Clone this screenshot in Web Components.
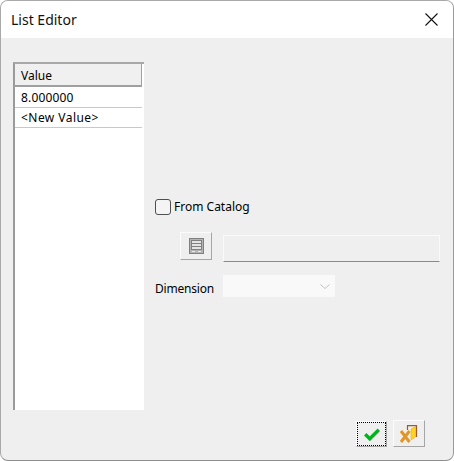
<!DOCTYPE html>
<html>
<head>
<meta charset="utf-8">
<title>List Editor</title>
<style>
  html, body { margin: 0; padding: 0; background: #fff; }
  body { font: 12px "Noto Sans", "Liberation Sans", sans-serif; color: #000; }
</style>
</head>
<body>
<list-editor></list-editor>

<script>
class ValueList extends HTMLElement {
  constructor() {
    super();
    this.attachShadow({ mode: "open" });
    this.shadowRoot.innerHTML = `
      <style>
        :host {
          display: block;
          box-sizing: border-box;
          width: 131px;
          height: 348px;
          background: #fff;
          border-left: 2px solid #9b9b9b;
          border-top: 2px solid #a8a8a8;
          font-size: 12px;
        }
        .head {
          box-sizing: border-box;
          height: 23px;
          width: 127px;
          padding-left: 6px;
          line-height: 23px;
          background: #f0f0f0;
          border-right: 1px solid #a0a0a0;
          border-bottom: 2px solid #a0a0a0;
        }
        .row {
          box-sizing: border-box;
          width: 127px;
          height: 20px;
          padding-left: 6px;
          line-height: 20px;
          letter-spacing: 0.15px;
          border-bottom: 1px solid #c8c8c8;
        }
        .row.first { height: 21px; line-height: 21px; }
        .row.new { letter-spacing: 0.45px; }
      </style>
      <div class="head">Value</div>
      <div class="row first">8.000000</div>
      <div class="row new">&lt;New Value&gt;</div>
    `;
  }
}

class IconButton extends HTMLElement {
  constructor() {
    super();
    this.attachShadow({ mode: "open" });
    this.shadowRoot.innerHTML = `
      <style>
        :host {
          display: flex;
          box-sizing: border-box;
          align-items: center;
          justify-content: center;
          position: relative;
          width: 32px;
          height: 27px;
          background: #efefef;
          border: 1px solid;
          border-color: #fbfbfb #a6a6a6 #a6a6a6 #fbfbfb;
        }
        :host([focused])::after {
          content: "";
          position: absolute;
          inset: 0;
          border: 1px dotted #000;
        }
      </style>
      <slot></slot>
    `;
  }
}

class ListEditor extends HTMLElement {
  constructor() {
    super();
    this.attachShadow({ mode: "open" });
    this.shadowRoot.innerHTML = `
      <style>
        :host {
          display: block;
          width: 454px;
          height: 461px;
          font: 12px "Noto Sans", "Liberation Sans", sans-serif;
        }
        .win {
          box-sizing: border-box;
          width: 454px;
          height: 461px;
          display: flex;
          flex-direction: column;
          overflow: hidden;
          background: #efefef;
          border: 1px solid #a9a9a9;
          border-bottom-color: #8e8e8e;
          border-right-color: #9a9a9a;
          border-radius: 8px;
        }
        .title {
          flex: none;
          height: 37px;
          display: flex;
          align-items: center;
          justify-content: space-between;
          padding: 0 15px 0 10px;
          background: #fff;
          font-size: 14px;
          color: #111;
        }
        .title svg { display: block; }
        .main {
          flex: none;
          display: flex;
          padding: 24px 0 0 12px;
        }
        .side {
          flex: none;
          width: 296px;
          padding: 136px 0 0 11px;
        }
        .check {
          display: flex;
          align-items: center;
          height: 18px;
          gap: 3px;
        }
        .check .label { padding-bottom: 2px; }
        .box {
          box-sizing: border-box;
          width: 16px;
          height: 16px;
          background: #f4f4f4;
          border: 1px solid #4f4f4f;
          border-radius: 3px;
        }
        .cat {
          display: flex;
          align-items: flex-start;
          gap: 11px;
          margin: 16px 0 0 25px;
        }
        .cat icon-button { height: 28px; }
        .path {
          box-sizing: border-box;
          width: 217px;
          height: 27px;
          margin-top: 3px;
          background: #efefef;
          border: 1px solid #fafafa;
          border-bottom: 1px solid #8a8a8a;
        }
        .dim {
          display: flex;
          align-items: center;
          margin-top: 13px;
          height: 22px;
        }
        .dim label { width: 68px; padding-top: 4px; letter-spacing: -0.2px; }
        .select {
          box-sizing: border-box;
          width: 112px;
          height: 22px;
          display: flex;
          align-items: center;
          justify-content: flex-end;
          padding-right: 5px;
          background: #f9f9f9;
        }
        .foot {
          flex: none;
          display: flex;
          align-items: flex-end;
          justify-content: flex-end;
          gap: 6px;
          padding: 10px 28px 0 0;
        }
        .foot icon-button[focused] { height: 26px; width: 31px; }
      </style>
      <div class="win">
        <div class="title">
          <span>List Editor</span>
          <svg width="13" height="13" viewBox="0 0 13 13" fill="none" stroke="#111" stroke-width="1.1">
            <path d="M0.5 0.5L12.5 12.5M12.5 0.5L0.5 12.5"/>
          </svg>
        </div>
        <div class="main">
          <value-list></value-list>
          <div class="side">
            <div class="check"><span class="box"></span><span class="label">From Catalog</span></div>
            <div class="cat">
              <icon-button>
                <svg width="15" height="16" viewBox="0 0 15 16" fill="none" stroke="#808080">
                  <rect x="0.5" y="0.5" width="14" height="15" fill="#b4b4b4"/>
                  <rect x="2.5" y="2.5" width="10" height="3" fill="#e4e4e4"/>
                  <rect x="2.5" y="5.5" width="10" height="3" fill="#e4e4e4"/>
                  <rect x="2.5" y="8.5" width="10" height="3" fill="#e4e4e4"/>
                  <path d="M3 13.5H6M9 13.5H12" stroke="#e8e8e8"/>
                </svg>
              </icon-button>
              <div class="path"></div>
            </div>
            <div class="dim">
              <label>Dimension</label>
              <div class="select">
                <svg width="10" height="5" viewBox="0 0 10 5" fill="none" stroke="#c0c0c0">
                  <path d="M0.5 0.5L5 4.5L9.5 0.5"/>
                </svg>
              </div>
            </div>
          </div>
        </div>
        <div class="foot">
          <icon-button focused>
            <svg width="16" height="13" viewBox="0 0 16 13" fill="none">
              <path d="M1.2 6.2L5.8 10.8L14.8 1.8" stroke="#00b41e" stroke-width="3.4"/>
            </svg>
          </icon-button>
          <icon-button>
            <svg width="18" height="18" viewBox="0 0 18 18" fill="none">
              <path d="M7.5 5V0.6H16.5V12" stroke="#a8581a" stroke-width="1.2"/>
              <path d="M11 4L15.5 1.6V12L11 15Z" fill="#ffd21e" stroke="#d8a818" stroke-width="0.5"/>
              <path d="M1 6L9.5 17M9.5 6L1 17" stroke="#e0962a" stroke-width="3"/>
            </svg>
          </icon-button>
        </div>
      </div>
    `;
  }
}

customElements.define("value-list", ValueList);
customElements.define("icon-button", IconButton);
customElements.define("list-editor", ListEditor);
</script>
</body>
</html>
